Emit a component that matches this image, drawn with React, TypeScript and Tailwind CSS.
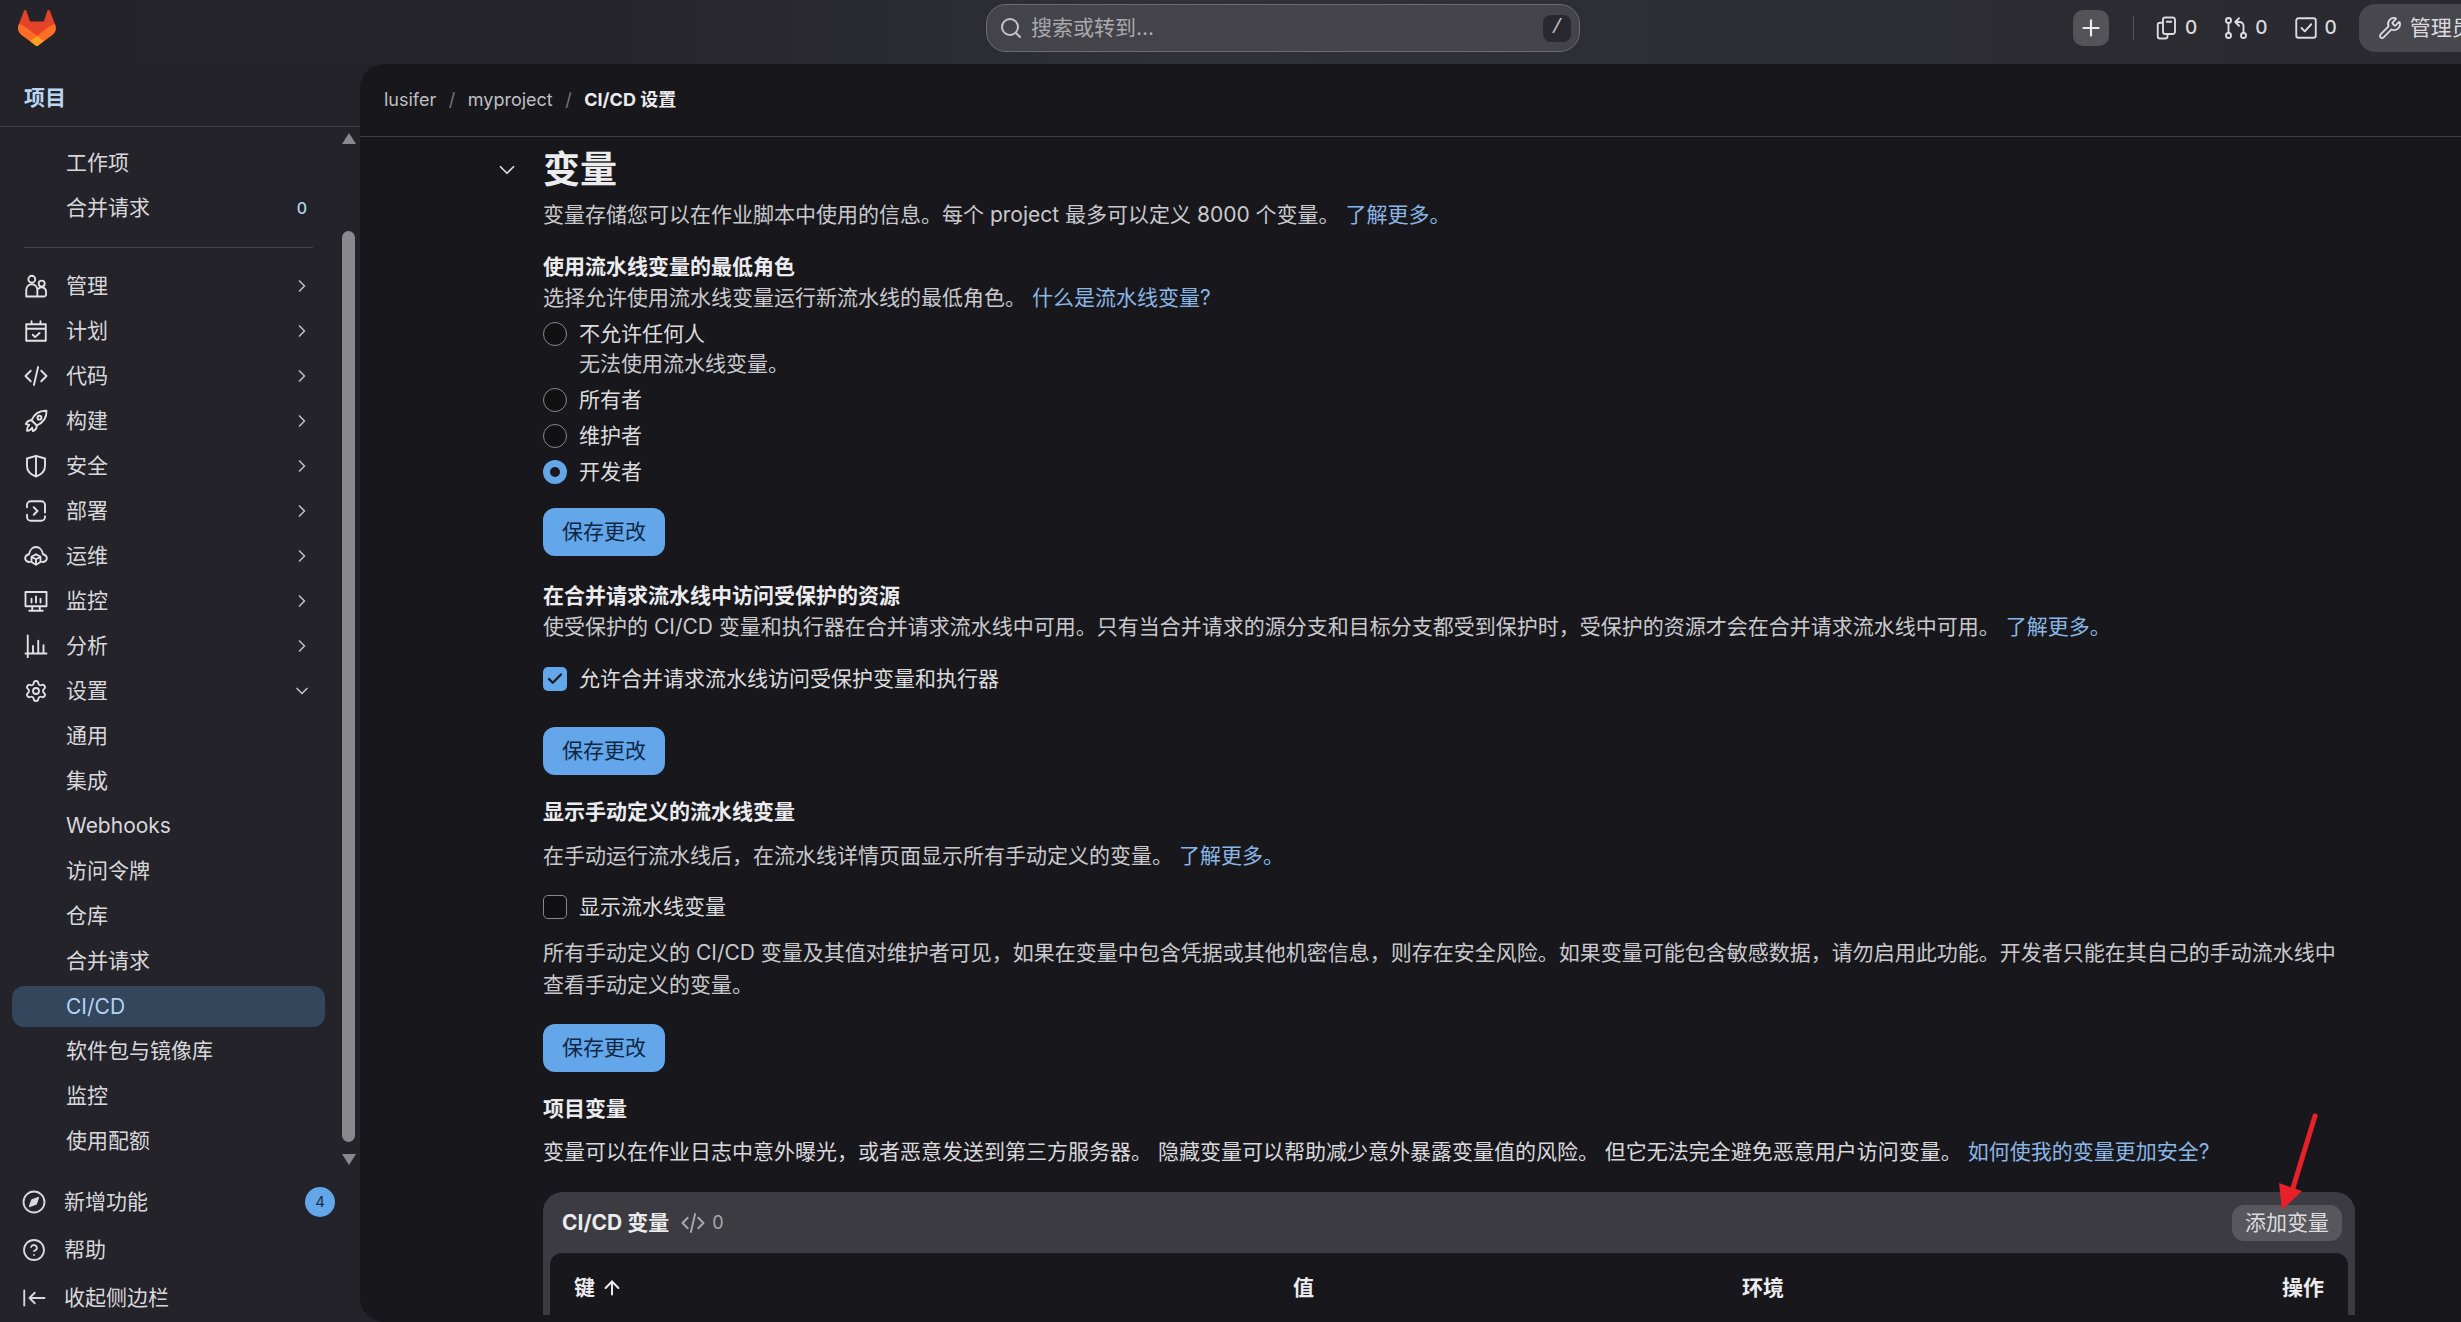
import type { ReactNode } from "react";
import { ChevronRight, ChevronDown, Plus, Search, Wrench, Settings, CircleHelp, Check, ArrowUp } from "lucide-react";

const sans = "font-['Inter','Noto_Sans_CJK_SC',sans-serif]";

function Glyph({ children, size = 24 }: { children: ReactNode; size?: number }) {
  return (
    <svg width={size} height={size} viewBox="0 0 16 16" fill="none" stroke="currentColor" strokeWidth="1.25" strokeLinecap="round" strokeLinejoin="round" className="shrink-0">
      {children}
    </svg>
  );
}

const CodeIcon = ({ size = 24 }: { size?: number }) => (
  <Glyph size={size}>
    <path d="M4.500 4.500 1 8l3.500 3.500M11.500 4.500 15 8l-3.500 3.500M9.400 2 6.600 14" />
  </Glyph>
);

const navIcons: Record<string, ReactNode> = {
  管理: (
    <Glyph>
      <circle cx="5.200" cy="3.500" r="2.300" />
      <path d="M1.500 15v-4.500a3.700 3.700 0 0 1 7.400 0V15zM8.900 15h4.400a1.400 1.400 0 0 0 1.400-1.400v-1.800a2.900 2.900 0 0 0-5-2" />
      <circle cx="11.800" cy="6.400" r="2" />
    </Glyph>
  ),
  计划: (
    <Glyph>
      <path d="M1.500 3.500h13v11h-13zM1.500 6.500h13M5 1.500v2M11 1.500v2M5.800 10.500l1.600 1.600 3-2.800" />
    </Glyph>
  ),
  代码: <CodeIcon />,
  构建: (
    <Glyph>
      <path d="M15 1.200c-4.500-.2-8 1.800-10 6.300L8.500 11C13 9 15.200 5.500 15 1.200z" />
      <circle cx="10.300" cy="5.800" r="1.300" />
      <path d="M5 7.500c-1.500 0-3 .8-3.800 2.500l2.300.6M8.500 11c0 1.500-.8 3-2.500 3.800l-.6-2.300M3.500 10.600c-1.200 1-1.500 2.500-1.500 3.900 1.400 0 2.500-.4 3.400-2" />
    </Glyph>
  ),
  安全: (
    <Glyph>
      <path d="M8 1.200 14 3v5c0 3.300-2.400 5.700-6 7-3.600-1.300-6-3.700-6-7V3zM8 1.200V15" />
    </Glyph>
  ),
  部署: (
    <Glyph>
      <path d="M2 5.500V4a2.500 2.500 0 0 1 2.500-2.500h7A2.500 2.500 0 0 1 14 4v5M14 11.500V12a2.500 2.500 0 0 1-2.500 2.500h-7A2.500 2.500 0 0 1 2 12v-1.500M6.500 5.500 9 8l-2.500 2.500" />
    </Glyph>
  ),
  运维: (
    <Glyph>
      <path d="M3.800 12C1.800 12 .7 10.700.8 9.300 1 7.900 2 7 3.400 6.800 3.800 4 5.700 2 8 2s4.200 2 4.600 4.800C14 7 15 7.900 15.200 9.300c.1 1.400-1 2.700-3 2.700M8 6.800l3 1.700V12l-3 1.800L5 12V8.500zM5 8.500l3 1.700 3-1.700M8 10.200v3.600" />
    </Glyph>
  ),
  监控: (
    <Glyph>
      <path d="M1 2h14v9.500H1zM5 6.500v2.500M8 5v4M11 6.500v2.500M5.500 11.500v3h5v-3M3.500 14.500h9" />
    </Glyph>
  ),
  分析: (
    <Glyph>
      <path d="M2.500 1v14.500M1 13h14M6 8v5M9.500 4.500V13M13 7.500V13" />
    </Glyph>
  ),
  设置: <Settings size={24} strokeWidth={1.8} />,
};

const expandable = ["管理", "计划", "代码", "构建", "安全", "部署", "运维", "监控", "分析"];
const settingsPages = ["通用", "集成", "Webhooks", "访问令牌", "仓库", "合并请求", "CI/CD", "软件包与镜像库", "监控", "使用配额"];

function SaveButton() {
  return (
    <button className="flex h-12 w-[122px] items-center justify-center rounded-xl bg-[#63a6e9] text-[21px] text-[#0f2744]">
      保存更改
    </button>
  );
}

function RadioRow({ label, checked, className = "" }: { label: string; checked?: boolean; className?: string }) {
  return (
    <label className={`flex h-7 items-center gap-3 text-[#dcdcde] ${className}`}>
      {checked ? (
        <span className="flex size-6 items-center justify-center rounded-full bg-[#63a6e9]">
          <span className="size-2.5 rounded-full bg-[#18181c]" />
        </span>
      ) : (
        <span className="size-6 rounded-full border border-[#89888d] bg-[#111114]" />
      )}
      {label}
    </label>
  );
}

function CheckRow({ label, checked, className = "" }: { label: string; checked?: boolean; className?: string }) {
  return (
    <label className={`flex h-[30px] items-center gap-3 text-[#dcdcde] ${className}`}>
      {checked ? (
        <span className="flex size-6 items-center justify-center rounded-[5px] bg-[#63a6e9] text-[#18181c]">
          <Check size={18} strokeWidth={3} />
        </span>
      ) : (
        <span className="size-6 rounded-[5px] border border-[#89888d] bg-[#111114]" />
      )}
      {label}
    </label>
  );
}

const Link = ({ children }: { children: ReactNode }) => <a className="ml-[6px] text-[#8ab6e6]">{children}</a>;

function TopBar() {
  return (
    <header className="flex h-16 shrink-0 items-start bg-[linear-gradient(90deg,#232329_0%,#25252b_25%,#303037_48%,#29292f_100%)]">
      <svg width="38" height="36" viewBox="0 0 25 24" className="ml-[18px] mt-[10px] shrink-0">
        <path fill="#E24329" d="M24.507 9.500l-.034-.090L21.082.562a.896.896 0 0 0-1.694.091l-2.290 7.010H7.825L5.535.653a.898.898 0 0 0-1.694-.090L.451 9.411.416 9.500a6.297 6.297 0 0 0 2.090 7.278l.012.010.030.022 5.160 3.867 2.560 1.935 1.554 1.176a1.051 1.051 0 0 0 1.268 0l1.555-1.176 2.560-1.935 5.197-3.890.014-.010A6.297 6.297 0 0 0 24.507 9.500z" />
        <path fill="#FC6D26" d="M24.507 9.500l-.034-.090a11.440 11.440 0 0 0-4.560 2.051l-7.447 5.632 4.742 3.584 5.197-3.890.014-.010A6.297 6.297 0 0 0 24.507 9.500z" />
        <path fill="#FCA326" d="M7.707 20.677l2.560 1.935 1.555 1.176a1.051 1.051 0 0 0 1.268 0l1.555-1.176 2.560-1.935-4.743-3.584-4.755 3.584z" />
        <path fill="#FC6D26" d="M5.010 11.461a11.430 11.430 0 0 0-4.560-2.050L.416 9.500a6.297 6.297 0 0 0 2.090 7.278l.012.010.030.022 5.160 3.867 4.745-3.584-7.444-5.632z" />
      </svg>

      <div className="ml-[930px] mt-1 flex h-12 w-[594px] items-center rounded-[20px] border border-[#6c6c72] bg-[#434349] pl-3 pr-2 text-[#a9a9ae]">
        <Search size={24} strokeWidth={2} className="text-[#c4c4c8]" />
        <span className="ml-2 flex-1 text-[21px]">搜索或转到...</span>
        <kbd className="flex h-[27px] w-7 items-center justify-center rounded-lg bg-[#28282e] text-[20px] text-[#bdbdc1]">/</kbd>
      </div>

      <div className="ml-[493px] mt-[10px] flex size-9 items-center justify-center rounded-[10px] bg-[#535358] text-[#ececef]">
        <Plus size={26} strokeWidth={2} />
      </div>
      <div className="ml-6 mt-4 h-6 w-px bg-[#55555b]" />
      <div className="mt-4 flex h-6 items-center text-[19px] font-medium text-[#dcdcde]">
        <span className="ml-5 flex items-center gap-[7px]">
          <Glyph>
            <path d="M6 2.500A1.500 1.500 0 0 1 7.500 1h5A1.500 1.500 0 0 1 14 2.500v8a1.500 1.500 0 0 1-1.500 1.500H7.500A1.500 1.500 0 0 1 6 10.500zM8.500 3.800h3M6 4.500H4A1.500 1.500 0 0 0 2.500 6v7.500A1.500 1.500 0 0 0 4 15h3.500A1.500 1.500 0 0 0 9 13.500V12" />
          </Glyph>
          0
        </span>
        <span className="ml-[27px] flex items-center gap-[7px]">
          <Glyph>
            <circle cx="3" cy="3" r="1.700" />
            <circle cx="3" cy="13" r="1.700" />
            <circle cx="13" cy="13" r="1.700" />
            <path d="M3 4.700v6.600M13 11.300V6.500A2.500 2.500 0 0 0 10.500 4H8M10 1.500 7.500 4 10 6.500" />
          </Glyph>
          0
        </span>
        <span className="ml-[26px] flex items-center gap-[7px]">
          <Glyph>
            <path d="M14.500 6.500V3A1.500 1.500 0 0 0 13 1.500H3A1.500 1.500 0 0 0 1.500 3v10A1.500 1.500 0 0 0 3 14.500h10a1.500 1.500 0 0 0 1.500-1.500V6.500zM5 8l2.200 2.200L11.500 5.500" />
          </Glyph>
          0
        </span>
      </div>
      <div className="ml-[22px] mt-1 flex h-12 flex-1 items-center overflow-hidden whitespace-nowrap rounded-l-2xl bg-[#47474d] pl-[19px] text-[21px] text-[#dcdcde]">
        <Wrench size={24} strokeWidth={1.8} className="shrink-0" />
        <span className="ml-2">管理员</span>
      </div>
    </header>
  );
}

function Sidebar() {
  return (
    <aside className="flex w-[360px] shrink-0 flex-col text-[21px] text-[#d8d8dc]">
      <div className="flex h-[63px] shrink-0 items-center border-b border-[#3d3d43] pl-6 pt-[5px] font-bold text-[#b9d6f2]">项目</div>

      <div className="flex min-h-0 flex-1">
        <nav className="w-[341px] shrink-0 pl-3 pr-4 pt-[13px]">
          <div className="flex h-[45px] items-center pl-[54px]">工作项</div>
          <div className="flex h-[45px] items-center pl-[54px]">
            <span className="flex-1">合并请求</span>
            <span className="mr-[18px] text-[16px] font-medium text-[#b5d3f2]">0</span>
          </div>
          <div className="mx-3 mb-[15px] mt-[17px] h-px bg-[#45454b]" />
          {expandable.map((name) => (
            <div key={name} className="flex h-[45px] items-center pl-3">
              <span className="flex w-[42px] text-[#e2e2e5]">{navIcons[name]}</span>
              <span className="flex-1">{name}</span>
              <ChevronRight size={20} strokeWidth={2} className="mr-[13px] text-[#bcbcc0]" />
            </div>
          ))}
          <div className="flex h-[45px] items-center pl-3">
            <span className="flex w-[42px] text-[#e2e2e5]">{navIcons["设置"]}</span>
            <span className="flex-1">设置</span>
            <ChevronDown size={20} strokeWidth={2} className="mr-[13px] text-[#bcbcc0]" />
          </div>
          {settingsPages.map((name, i) => (
            <div
              key={i}
              className={name === "CI/CD" ? "mb-px mt-[3px] flex h-[41px] items-center rounded-xl bg-[#33465c] pl-[54px] text-[#b5d3f2]" : "flex h-[45px] items-center pl-[54px]"}
            >
              {name}
            </div>
          ))}
        </nav>
        <div className="flex w-[15px] flex-col items-center pt-[6px]">
          <div className="size-0 border-x-[7px] border-b-[11px] border-x-transparent border-b-[#89888d]" />
          <div className="mt-[87px] h-[911px] w-[13px] rounded-full bg-[#89888d]" />
          <div className="mt-3 size-0 border-x-[7px] border-t-[11px] border-x-transparent border-t-[#89888d]" />
        </div>
      </div>

      <div className="shrink-0 pl-[22px] pt-[3px]">
        <div className="flex h-12 items-center">
          <Glyph>
            <circle cx="8" cy="8" r="7" />
            <path d="M10.800 5.200 9.300 9.300 5.200 10.800l1.500-4.100z" fill="currentColor" />
          </Glyph>
          <span className="ml-[18px] flex-1">新增功能</span>
          <span className="mr-[25px] flex size-[30px] items-center justify-center rounded-full bg-[#63a6e9] text-[15px] text-[#1b2c44]">4</span>
        </div>
        <div className="flex h-12 items-center">
          <CircleHelp size={24} strokeWidth={1.8} />
          <span className="ml-[18px]">帮助</span>
        </div>
        <div className="flex h-12 items-center">
          <Glyph>
            <path d="M1.500 3v10M15 8H5M8.500 4.500 5 8l3.500 3.500" />
          </Glyph>
          <span className="ml-[18px]">收起侧边栏</span>
        </div>
      </div>
    </aside>
  );
}

function Variables() {
  return (
    <div className="min-h-0 flex-1 overflow-hidden pl-[183px] pr-[106px] text-[21px] leading-[30px] text-[#c9c9cd]">
      <div className="relative mt-2 h-[50px] text-[37px] font-bold leading-[50px] text-[#ececef]">
        <ChevronDown size={26} strokeWidth={1.6} className="absolute -left-[49px] top-3 text-[#dcdcde]" />
        变量
      </div>
      <p className="mt-[5px]">
        变量存储您可以在作业脚本中使用的信息。每个 project 最多可以定义 8000 个变量。
        <Link>了解更多。</Link>
      </p>

      <h3 className="mt-[22px] font-bold text-[#ececef]">使用流水线变量的最低角色</h3>
      <p className="mt-px">
        选择允许使用流水线变量运行新流水线的最低角色。
        <Link>什么是流水线变量?</Link>
      </p>
      <RadioRow label="不允许任何人" className="mt-[7px]" />
      <p className="ml-9 mt-[2px] h-7 leading-7">无法使用流水线变量。</p>
      <RadioRow label="所有者" className="mt-2" />
      <RadioRow label="维护者" className="mt-2" />
      <RadioRow checked label="开发者" className="mt-2" />
      <div className="mt-[22px]">
        <SaveButton />
      </div>

      <h3 className="mt-[25px] font-bold text-[#ececef]">在合并请求流水线中访问受保护的资源</h3>
      <p className="mt-px">
        使受保护的 CI/CD 变量和执行器在合并请求流水线中可用。只有当合并请求的源分支和目标分支都受到保护时，受保护的资源才会在合并请求流水线中可用。
        <Link>了解更多。</Link>
      </p>
      <CheckRow checked label="允许合并请求流水线访问受保护变量和执行器" className="mt-[22px]" />
      <div className="mt-[33px]">
        <SaveButton />
      </div>

      <h3 className="mt-[22px] font-bold text-[#ececef]">显示手动定义的流水线变量</h3>
      <p className="mt-[14px]">
        在手动运行流水线后，在流水线详情页面显示所有手动定义的变量。
        <Link>了解更多。</Link>
      </p>
      <CheckRow label="显示流水线变量" className="mt-[21px]" />
      <p className="mt-[15px] leading-8">
        所有手动定义的 CI/CD 变量及其值对维护者可见，如果在变量中包含凭据或其他机密信息，则存在安全风险。如果变量可能包含敏感数据，请勿启用此功能。开发者只能在其自己的手动流水线中
        <br />
        查看手动定义的变量。
      </p>
      <div className="mt-[23px]">
        <SaveButton />
      </div>

      <h3 className="mt-[22px] font-bold text-[#ececef]">项目变量</h3>
      <p className="mt-[13px] text-[#d8d8dc]">
        变量可以在作业日志中意外曝光，或者恶意发送到第三方服务器。 隐藏变量可以帮助减少意外暴露变量值的风险。 但它无法完全避免恶意用户访问变量。
        <Link>如何使我的变量更加安全?</Link>
      </p>

      <section className="mt-[25px] rounded-t-[20px] bg-[#3b3b41] px-[7px]">
        <div className="flex h-[61px] items-center pl-3 pr-[6px]">
          <h4 className="font-bold text-[#ececef]">CI/CD 变量</h4>
          <span className="ml-3 flex items-center gap-[7px] text-[18px] text-[#a9a9ae]">
            <CodeIcon size={24} />0
          </span>
          <button className="ml-auto flex h-9 w-[110px] items-center justify-center rounded-xl bg-[#57575d] text-[#dcdcde]">添加变量</button>
        </div>
        <div className="grid h-[70px] grid-cols-[719px_449px_1fr_auto] items-center rounded-t-xl bg-[#18181c] px-6 font-bold text-[#ececef]">
          <span className="flex items-center gap-[6px]">
            键 <ArrowUp size={22} strokeWidth={2.2} />
          </span>
          <span>值</span>
          <span>环境</span>
          <span>操作</span>
        </div>
      </section>
    </div>
  );
}

export default function App() {
  return (
    <div className={`relative flex h-screen w-screen flex-col overflow-hidden bg-[#232329] ${sans}`}>
      <TopBar />
      <div className="flex min-h-0 flex-1">
        <Sidebar />
        <main className="flex min-w-0 flex-1 flex-col rounded-l-3xl bg-[#18181c] pb-[7px]">
          <div className="flex h-[73px] shrink-0 items-center gap-[12.5px] border-b border-[#3d3d43] pb-[2px] pl-6 text-[18px] text-[#bfbfc3]">
            <span>lusifer</span>
            <span className="text-[#77777c]">/</span>
            <span>myproject</span>
            <span className="text-[#77777c]">/</span>
            <span className="font-bold text-[#ececef]">CI/CD 设置</span>
          </div>
          <Variables />
        </main>
      </div>
      {/* annotation arrow */}
      <svg width="48" height="104" viewBox="0 0 48 104" className="absolute left-[2276px] top-[1112px]">
        <path d="M39 4 17 76" stroke="#e8202a" strokeWidth="5" strokeLinecap="round" />
        <path d="M6 98 3 71 26 79z" fill="#e8202a" />
      </svg>
    </div>
  );
}
